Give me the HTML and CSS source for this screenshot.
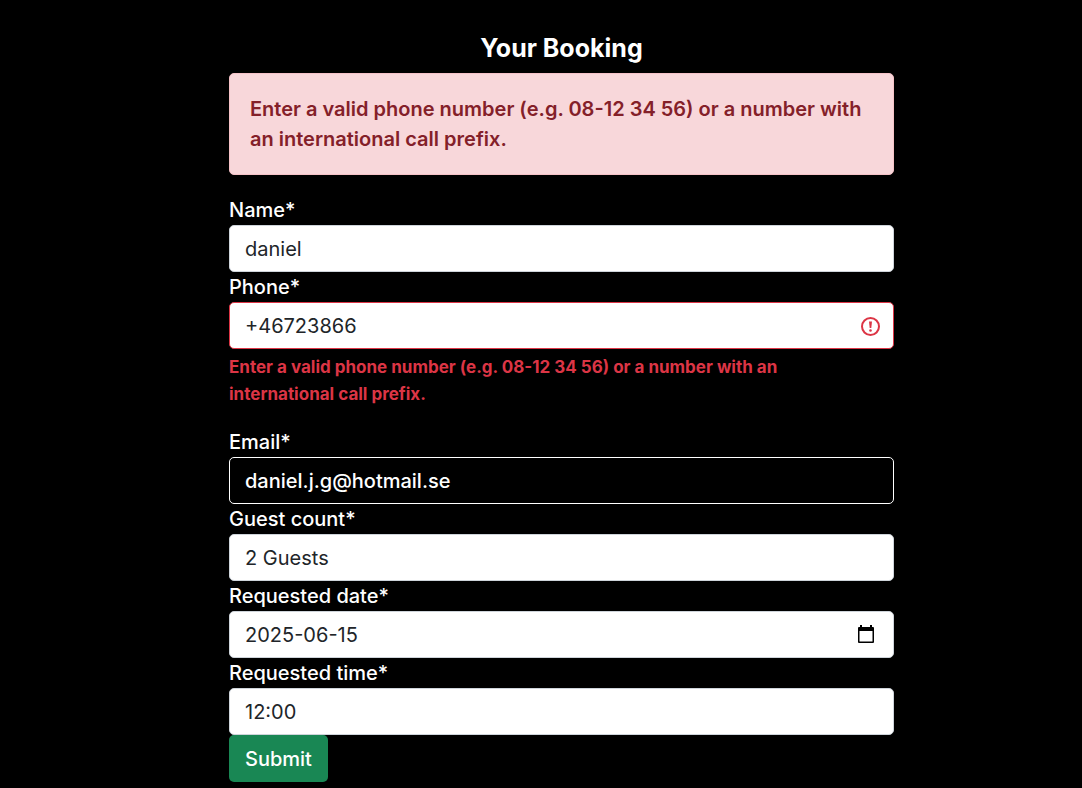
FILE: index.html
```html
<!DOCTYPE html>
<html lang="en">
<head>
<meta charset="utf-8">
<meta name="viewport" content="width=device-width, initial-scale=1">
<title>Your Booking</title>
<link rel="stylesheet" href="styles.css">
</head>
<body>
<main class="booking">
  <h1 class="title">Your Booking</h1>
  <div class="alert" role="alert">Enter a valid phone number (e.g. 08-12 34 56) or a number with an international call prefix.</div>
  <form class="form">
    <div class="field">
      <label class="label" for="name">Name*</label>
      <input class="control" id="name" type="text" value="daniel" required>
    </div>
    <div class="field field-error">
      <label class="label" for="phone">Phone*</label>
      <div class="control-wrap">
        <input class="control control-invalid" id="phone" type="tel" value="+46723866" aria-invalid="true" aria-describedby="phone-error" required>
        <svg class="error-icon" viewBox="0 0 24 24" fill="none" stroke="#dc3545" stroke-width="2" aria-hidden="true">
          <circle cx="12.500" cy="12.500" r="8.500"/>
          <path stroke="none" fill="#dc3545" d="M11 7.500h3l-.7 6.500h-1.600z"/>
          <circle cx="12.500" cy="16.500" r="1.300" fill="#dc3545" stroke="none"/>
        </svg>
      </div>
      <p class="feedback" id="phone-error">Enter a valid phone number (e.g. 08-12 34 56) or a number with an international call prefix.</p>
    </div>
    <div class="field">
      <label class="label" for="email">Email*</label>
      <input class="control control-dark" id="email" type="email" value="daniel.j.g@hotmail.se" required>
    </div>
    <div class="field">
      <label class="label" for="guests">Guest count*</label>
      <select class="control" id="guests"><option>2 Guests</option></select>
    </div>
    <div class="field">
      <label class="label" for="date">Requested date*</label>
      <div class="control-wrap">
        <input class="control" id="date" type="text" value="2025-06-15" required>
        <button class="picker" type="button" aria-label="Open calendar">
          <svg class="picker-icon" viewBox="0 0 16 18" aria-hidden="true">
            <path fill="#000" fill-rule="evenodd" d="M2 0h2v2h8V0h2v2h1a1 1 0 0 1 1 1v14a1 1 0 0 1-1 1H1a1 1 0 0 1-1-1V3a1 1 0 0 1 1-1h1zM1.500 6v10.500h13V6z"/>
          </svg>
        </button>
      </div>
    </div>
    <div class="field">
      <label class="label" for="time">Requested time*</label>
      <select class="control" id="time"><option>12:00</option></select>
    </div>
    <button class="submit" type="submit">Submit</button>
  </form>
</main>
</body>
</html>
```
FILE: styles.css
```css
*, *::before, *::after { box-sizing: border-box; }

body {
  margin: 0;
  padding: 32px 0 6px 41px;
  background: #000;
  color: #fff;
  font-family: Inter, "Liberation Sans", sans-serif;
  font-size: 20px;
  line-height: 30px;
}

.booking { max-width: 665px; margin: 0 auto; }

.title {
  margin: 0 0 8px;
  font-size: 25px;
  line-height: 33px;
  font-weight: 700;
  text-align: center;
}

.alert {
  margin-bottom: 20px;
  padding: 20px;
  border: 1px solid #f5c2c7;
  border-radius: 5px;
  background: #f8d7da;
  color: #842029;
  font-weight: 600;
}

.label { display: block; font-weight: 500; }

.control {
  display: block;
  width: 100%;
  height: 47px;
  margin: 0;
  padding: 7px 15px;
  border: 1px solid #ced4da;
  border-radius: 5px;
  background: #fff;
  color: #212529;
  font: inherit;
  appearance: none;
}

.control-invalid { border-color: #dc3545; padding-right: 48px; }
.control-dark { border-color: #fff; background: #000; color: #fff; font-weight: 500; }

.control-wrap { position: relative; }

.error-icon {
  position: absolute;
  top: 12px;
  right: 12px;
  width: 24px;
  height: 24px;
}

.picker {
  position: absolute;
  top: 8px;
  right: 12px;
  width: 32px;
  height: 30px;
  padding: 0;
  border: 0;
  background: transparent;
  display: grid;
  place-items: center;
}

.picker-icon { width: 16px; height: 18px; }

.field-error { margin-bottom: 19px; }

.feedback {
  margin: 5px 0 0;
  padding-right: 20px;
  color: #dc3545;
  font-size: 17px;
  line-height: 27px;
  font-weight: 700;
}

.submit {
  display: block;
  height: 47px;
  padding: 7px 16px;
  border: 0;
  border-radius: 5px;
  background: #198754;
  color: #fff;
  font: inherit;
  font-weight: 500;
}
```
